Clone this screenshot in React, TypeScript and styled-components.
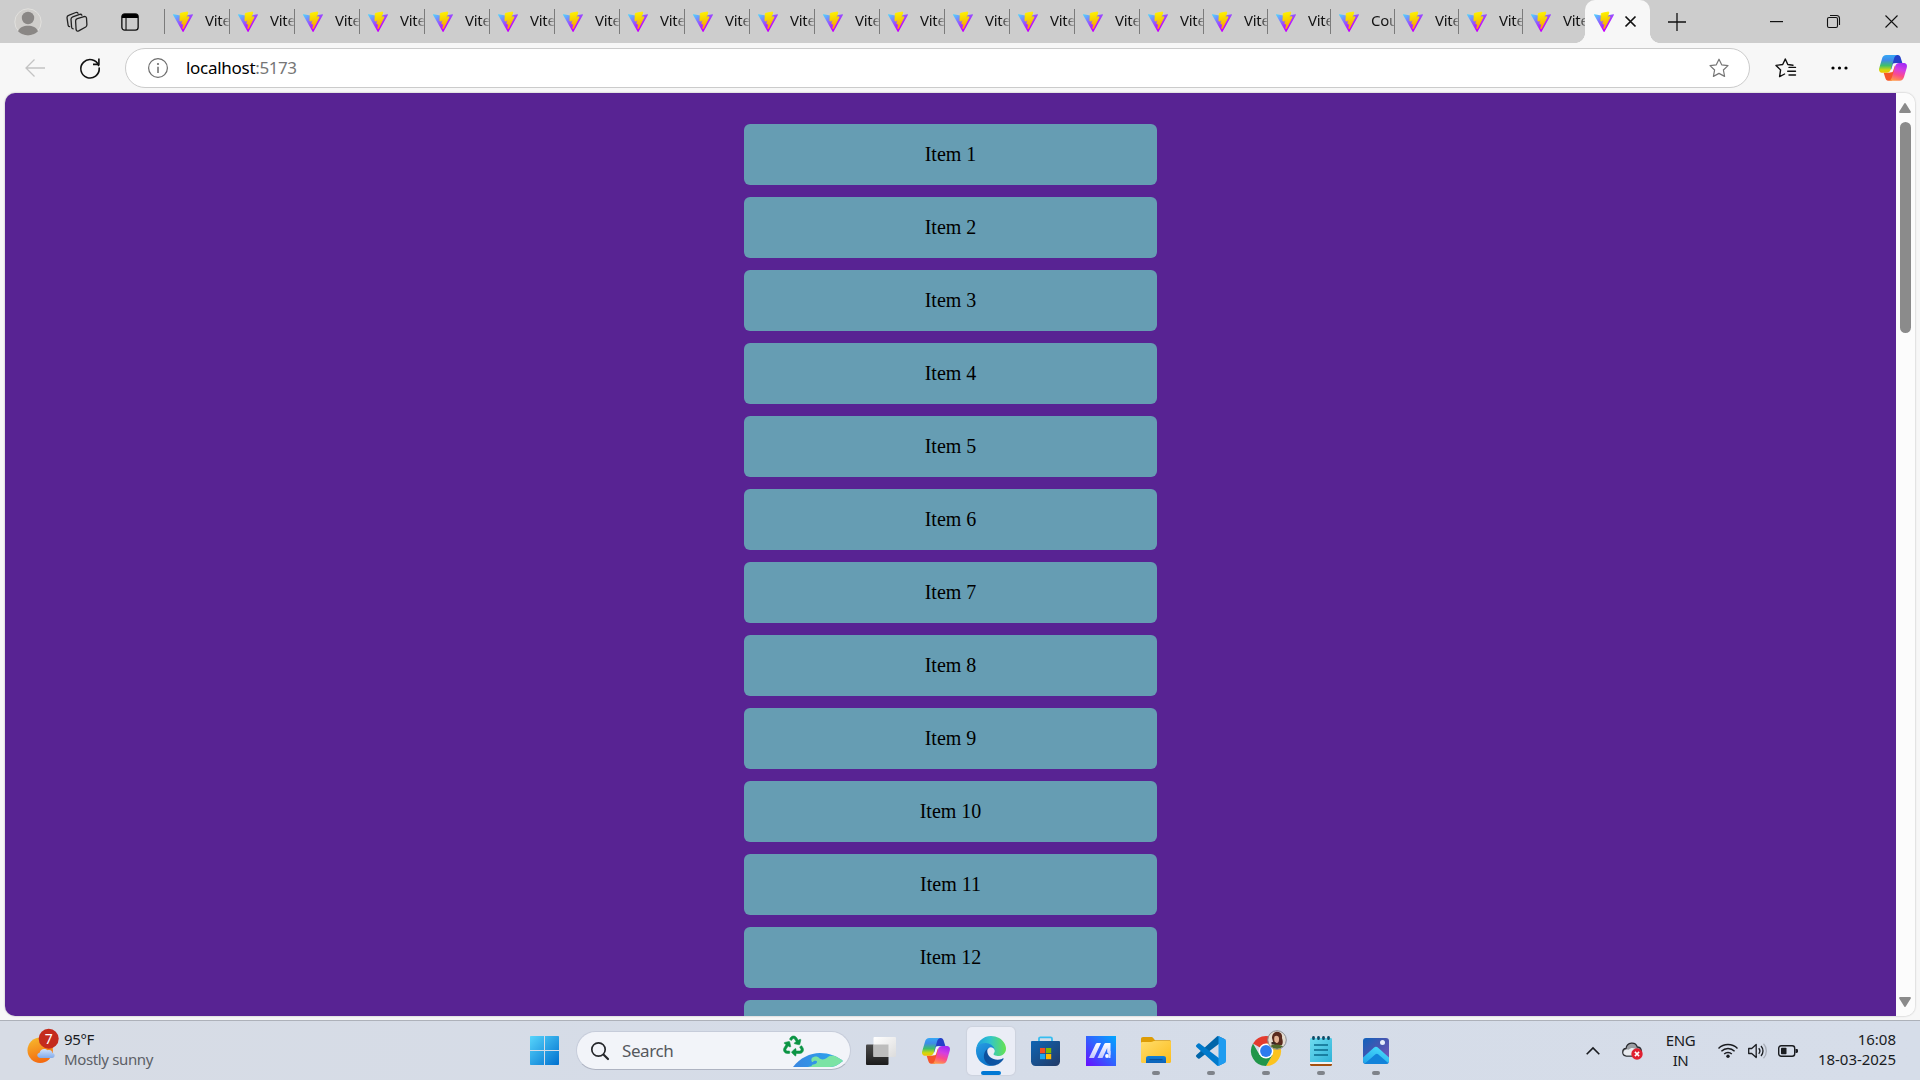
import React from 'react';
import styled, { createGlobalStyle } from 'styled-components';
import { FaRecycle } from 'react-icons/fa';

const uiFont = `'Noto Sans', 'Open Sans', sans-serif`;

const GlobalStyle = createGlobalStyle`
  * { box-sizing: border-box; }
  html, body { margin: 0; padding: 0; }
  body { overflow: hidden; font-family: ${uiFont}; }
  svg { display: block; flex: none; overflow: visible; }
`;

const Screen = styled.div`
  width: 1920px;
  height: 1080px;
  display: flex;
  flex-direction: column;
  background: #f7f7f7;
  overflow: hidden;
`;

/* ---------- tab strip ---------- */

const TabStrip = styled.header`
  height: 43px;
  flex: none;
  display: flex;
  background: #cdcdcd;
`;

const StripSlot = styled.div<{ $w: number }>`
  width: ${(p) => p.$w}px;
  height: 43px;
  flex: none;
  display: flex;
  align-items: center;
  justify-content: center;
`;

const Tab = styled.div<{ $w: number }>`
  width: ${(p) => p.$w}px;
  height: 43px;
  flex: none;
  display: flex;
  align-items: center;
  overflow: hidden;
  background: linear-gradient(#7b7b7b, #7b7b7b) 0 9px / 1px 25px no-repeat;
  padding: 0 0 0 9px;
  gap: 12px;
`;

const TabTitle = styled.span`
  width: 24px;
  flex: none;
  overflow: hidden;
  white-space: nowrap;
  font-size: 15px;
  line-height: 22px;
  letter-spacing: -0.3px;
  margin-top: -3px;
  color: transparent;
  background: linear-gradient(90deg, #111 66%, #cdcdcd 108%);
  background-clip: text;
  -webkit-background-clip: text;
`;

const ActiveTab = styled.div`
  position: relative;
  width: 65px;
  height: 43px;
  flex: none;
  display: flex;
  align-items: center;
  padding-left: 9px;
  gap: 11px;
  background: #f7f7f7;
  border-radius: 10px 10px 0 0;
  &::before,
  &::after {
    content: '';
    position: absolute;
    bottom: 0;
    width: 10px;
    height: 10px;
  }
  &::before {
    left: -10px;
    background: radial-gradient(circle at 0 0, #cdcdcd 9.6px, #f7f7f7 10.2px);
  }
  &::after {
    right: -10px;
    background: radial-gradient(circle at 100% 0, #cdcdcd 9.6px, #f7f7f7 10.2px);
  }
`;

const Spacer = styled.div`
  flex: 1;
`;

/* ---------- toolbar ---------- */

const Toolbar = styled.div`
  height: 50px;
  flex: none;
  display: flex;
  align-items: center;
  background: #f7f7f7;
`;

const ToolSlot = styled.div<{ $w: number }>`
  width: ${(p) => p.$w}px;
  height: 50px;
  flex: none;
  display: flex;
  align-items: center;
  justify-content: center;
`;

const AddressBar = styled.div`
  width: 1625px;
  height: 40px;
  flex: none;
  display: flex;
  align-items: center;
  border: 1px solid #cbcbcb;
  border-radius: 20px;
  background: #fff;
  padding: 0 19px 0 22px;
`;

const Url = styled.span`
  flex: 1;
  margin: -1px 0 0 18px;
  font-size: 17px;
  line-height: 24px;
  letter-spacing: -0.28px;
  color: #000;
  span {
    color: #767676;
    letter-spacing: -0.45px;
  }
`;

/* ---------- page ---------- */

const PageArea = styled.div`
  height: 927px;
  flex: none;
  padding: 0 5px 4px;
`;

const PageFrame = styled.div`
  height: 923px;
  display: flex;
  overflow: hidden;
  border-radius: 10px;
  box-shadow: 0 0 2px rgba(0, 0, 0, 0.3);
`;

const Page = styled.main`
  flex: 1;
  height: 923px;
  overflow: hidden;
  display: flex;
  flex-direction: column;
  align-items: center;
  gap: 12px;
  padding-top: 31px;
  background: #582393;
`;

const Item = styled.div`
  width: 413px;
  height: 61px;
  flex: none;
  display: flex;
  align-items: center;
  justify-content: center;
  border-radius: 6px;
  background: #669db3;
  font-family: 'Liberation Serif', 'Times New Roman', serif;
  font-size: 20px;
  line-height: 23px;
  color: #000;
`;

const Scrollbar = styled.div`
  width: 19px;
  height: 923px;
  flex: none;
  display: flex;
  flex-direction: column;
  align-items: center;
  background: #fcfcfc;
  padding: 10px 1px 9px 0;
`;

const Thumb = styled.div`
  width: 11px;
  height: 211px;
  margin-top: 9px;
  border-radius: 6px;
  background: #8b8b8b;
`;

/* ---------- taskbar ---------- */

const Taskbar = styled.footer`
  height: 60px;
  flex: none;
  display: flex;
  align-items: center;
  border-top: 1px solid #adb1b9;
  background: linear-gradient(90deg, #d7dce5, #d5dce8 50%, #d6dde9);
`;

const Weather = styled.div`
  width: 520px;
  height: 59px;
  flex: none;
  display: flex;
  align-items: center;
  padding: 0 0 4px 27px;
  gap: 5px;
`;

const WeatherIcon = styled.svg`
  width: 32px;
  height: 36px;
  margin-bottom: 5px;
`;

const TwoLines = styled.div<{ $align: string; $ls: number }>`
  display: flex;
  flex-direction: column;
  text-align: ${(p) => p.$align};
  font-size: 15px;
  line-height: 20px;
  letter-spacing: ${(p) => p.$ls}px;
  white-space: nowrap;
  color: #191b1e;
`;

const Muted = styled.span`
  color: #5c6066;
`;

const AppSlot = styled.div<{ $active?: boolean }>`
  position: relative;
  width: 48px;
  height: 48px;
  flex: none;
  display: flex;
  align-items: center;
  justify-content: center;
  border-radius: 5px;
  background: ${(p) => (p.$active ? '#eaedf6' : 'transparent')};
  box-shadow: ${(p) => (p.$active ? '0 0 1px 1px #cdd2de' : 'none')};
`;

const Running = styled.i<{ $active?: boolean }>`
  position: absolute;
  bottom: 0;
  left: ${(p) => (p.$active ? 14 : 20)}px;
  width: ${(p) => (p.$active ? 20 : 8)}px;
  height: 4px;
  border-radius: 2px;
  background: ${(p) => (p.$active ? '#0078d4' : '#7f838a')};
`;

const Apps = styled.div`
  display: flex;
  gap: 7px;
  margin-left: 6px;
`;

const SearchBox = styled.div`
  width: 275px;
  height: 39px;
  flex: none;
  display: flex;
  align-items: center;
  margin-left: 8px;
  padding: 0 7px 0 14px;
  border: 1px solid #c6ccda;
  border-bottom-color: #aeb3c2;
  border-radius: 20px;
  background: #f2f4f9;
`;

const SearchText = styled.span`
  flex: 1;
  margin-left: 13px;
  font-size: 17px;
  line-height: 24px;
  letter-spacing: -0.4px;
  color: #55585d;
`;

const SearchArt = styled.div`
  width: 60px;
  height: 37px;
  display: flex;
  align-items: flex-end;
  padding-bottom: 2px;
`;

const RecycleMark = styled(FaRecycle)`
  width: 21px;
  height: 20px;
  margin: 0 -11px 11px 0;
  color: #0b9444;
  stroke: #0b9444;
  stroke-width: 14px;
`;

const Tray = styled.div`
  flex: 1;
  height: 59px;
  display: flex;
  align-items: center;
  justify-content: flex-end;
  padding-right: 24px;
`;

const TraySlot = styled.div<{ $w: number; $lift?: number }>`
  width: ${(p) => p.$w}px;
  flex: none;
  display: flex;
  align-items: center;
  justify-content: center;
  padding-bottom: ${(p) => p.$lift ?? 0}px;
`;

/* ---------- icons ---------- */

const ViteLogo = () => (
  <svg width="20" height="20" viewBox="0 0 256 257">
    <path
      fill="url(#viteBody)"
      d="M255.153 37.938L134.897 252.976c-2.483 4.44-8.862 4.466-11.382.048L.875 37.958c-2.746-4.814 1.371-10.646 6.827-9.67l120.385 21.517a6.537 6.537 0 0 0 2.322-.004l117.867-21.483c5.438-.991 9.574 4.796 6.877 9.62Z"
    />
    <path
      fill="url(#viteBolt)"
      stroke="url(#viteBolt)"
      strokeWidth="12"
      d="M185.432.063L96.44 17.501a3.268 3.268 0 0 0-2.634 3.014l-5.474 92.456a3.268 3.268 0 0 0 3.997 3.378l24.777-5.718c2.318-.535 4.413 1.507 3.936 3.838l-7.361 36.047c-.495 2.426 1.782 4.5 4.151 3.78l15.304-4.649c2.372-.72 4.652 1.36 4.15 3.788l-11.698 56.621c-.732 3.542 3.979 5.473 5.943 2.437l1.313-2.028l72.516-144.72c1.215-2.423-.88-5.186-3.54-4.672l-25.505 4.922c-2.396.462-4.435-1.77-3.759-4.114l16.646-57.705c.677-2.35-1.37-4.583-3.769-4.113Z"
    />
  </svg>
);

const Defs = () => (
  <defs>
    <linearGradient id="viteBody" x1="-.8%" x2="57.6%" y1="7.6%" y2="78.4%">
      <stop offset="0" stopColor="#4fd0ff" />
      <stop offset="1" stopColor="#c400ff" />
    </linearGradient>
    <linearGradient id="viteBolt" x1="43.4%" x2="50.3%" y1="2.2%" y2="89%">
      <stop offset="0" stopColor="#fff000" />
      <stop offset=".4" stopColor="#f6d800" />
      <stop offset="1" stopColor="#ffa800" />
    </linearGradient>
    <linearGradient id="cpLeft" x1="0" x2="0" y1="0" y2="1">
      <stop offset="0" stopColor="#35a8f5" />
      <stop offset=".3" stopColor="#3f8be8" />
      <stop offset=".6" stopColor="#3fc06a" />
      <stop offset=".85" stopColor="#d5d80c" />
      <stop offset="1" stopColor="#f0c000" />
    </linearGradient>
    <linearGradient id="cpRight" x1=".6" x2=".3" y1="0" y2="1">
      <stop offset="0" stopColor="#a42cf5" />
      <stop offset=".35" stopColor="#d53fe0" />
      <stop offset=".65" stopColor="#fb4a8c" />
      <stop offset="1" stopColor="#ff9a45" />
    </linearGradient>
    <linearGradient id="winLogo" x1="0" x2="1" y1="0" y2="1">
      <stop offset="0" stopColor="#57d5fb" />
      <stop offset="1" stopColor="#0070cf" />
    </linearGradient>
    <linearGradient id="edgeA" x1="0" x2="1" y1="0" y2="0">
      <stop offset="0" stopColor="#1e9be0" />
      <stop offset=".45" stopColor="#2fc3cf" />
      <stop offset="1" stopColor="#66e34f" />
    </linearGradient>
    <linearGradient id="edgeB" x1="0" x2=".5" y1="0" y2="1">
      <stop offset="0" stopColor="#2a9fe4" />
      <stop offset="1" stopColor="#0a72c8" />
    </linearGradient>
    <linearGradient id="edgeC" x1="0" x2="1" y1="0" y2="0">
      <stop offset="0" stopColor="#0b4f9c" />
      <stop offset="1" stopColor="#1059a8" />
    </linearGradient>
    <linearGradient id="sun" x1=".3" x2=".6" y1="0" y2="1">
      <stop offset="0" stopColor="#f6b62c" />
      <stop offset="1" stopColor="#f4670f" />
    </linearGradient>
    <linearGradient id="cloud" x1="0" x2="0" y1="0" y2="1">
      <stop offset="0" stopColor="#cfe2fb" />
      <stop offset="1" stopColor="#83abea" />
    </linearGradient>
    <linearGradient id="store" x1="0" x2="1" y1="0" y2="1">
      <stop offset="0" stopColor="#0e65b4" />
      <stop offset="1" stopColor="#233a66" />
    </linearGradient>
    <linearGradient id="asus" x1="0" x2="1" y1="1" y2="0">
      <stop offset="0" stopColor="#6a0cff" />
      <stop offset=".5" stopColor="#3162ff" />
      <stop offset="1" stopColor="#00a8ff" />
    </linearGradient>
    <linearGradient id="asusMark" x1="0" x2="0" y1="0" y2="1">
      <stop offset="0" stopColor="#ffffff" />
      <stop offset="1" stopColor="#c3c9ff" />
    </linearGradient>
    <linearGradient id="folder" x1="0" x2="1" y1="0" y2="1">
      <stop offset="0" stopColor="#ffdc6b" />
      <stop offset="1" stopColor="#fcbd1c" />
    </linearGradient>
    <linearGradient id="folderBlue" x1="0" x2="0" y1="0" y2="1">
      <stop offset="0" stopColor="#1180d8" />
      <stop offset="1" stopColor="#0c62b8" />
    </linearGradient>
    <linearGradient id="note" x1="0" x2="1" y1="0" y2="1">
      <stop offset="0" stopColor="#6fdcf0" />
      <stop offset="1" stopColor="#2fb2d8" />
    </linearGradient>
    <linearGradient id="photoBg" x1="0" x2="1" y1="0" y2="1">
      <stop offset="0" stopColor="#0f62bd" />
      <stop offset=".45" stopColor="#4556b0" />
      <stop offset="1" stopColor="#7a58c0" />
    </linearGradient>
    <linearGradient id="photoHill" x1=".6" x2="0" y1="0" y2="1">
      <stop offset="0" stopColor="#45d8fb" />
      <stop offset="1" stopColor="#20a2e8" />
    </linearGradient>
    <linearGradient id="tvBack" x1="0" x2="0" y1="0" y2="1">
      <stop offset="0" stopColor="#4a4a4a" />
      <stop offset="1" stopColor="#1c1c1c" />
    </linearGradient>
    <linearGradient id="tvFront" x1="0" x2="1" y1="0" y2="1">
      <stop offset="0" stopColor="#ffffff" />
      <stop offset="1" stopColor="#dcdcdc" />
    </linearGradient>
    <linearGradient id="earth" x1="0" x2="1" y1="0" y2="0">
      <stop offset="0" stopColor="#3a86e0" />
      <stop offset="1" stopColor="#28a8f0" />
    </linearGradient>
    <clipPath id="earthClip">
      <path d="M0 14C7 5 17 0 27 0c9 0 17 3 23 8-4 3-8 6-13 6Z" />
    </clipPath>
    <clipPath id="avatarClip">
      <circle cx="26" cy="4" r="9" />
    </clipPath>
  </defs>
);

const SharedDefs = styled.svg`
  position: absolute;
  width: 0;
  height: 0;
`;

const Copilot = ({ w = 28 }: { w?: number }) => (
  <svg width={w} height={(w * 77) / 84} viewBox="0 0 84 77">
    <path d="M46 0h10c6 0 8 4 10 11l4 13H54c-7 0-9 4-11 10l-4 12-7-8Z" fill="#2440c8" />
    <path d="M38 77H28c-6 0-8-4-10-11l-4-13h16c7 0 9-4 11-10l4-12 7 8Z" fill="#f5552a" />
    <path
      d="M22 0h33c-6 1-8 5-10 11l-9 31c-2 7-6 11-13 11H11C2 53-2 47 1 38l8-27C11 4 15 0 22 0Z"
      fill="url(#cpLeft)"
    />
    <path
      d="M62 77H29c6-1 8-5 10-11l9-31c2-7 6-11 13-11h12c9 0 13 6 10 15l-8 27c-2 7-6 11-13 11Z"
      fill="url(#cpRight)"
    />
    <path d="M45 25h8c-4 2-5 5-7 11l-4 13c-1 2-2 3-4 3h-8c4-2 5-4 7-10l3-10c1-4 2-6 5-7Z" fill="#f7f7fb" />
  </svg>
);

const Profile = () => (
  <svg width="28" height="28" viewBox="0 0 28 28">
    <circle cx="14" cy="14" r="13.2" fill="#d0cecb" stroke="#e2e1de" />
    <circle cx="14" cy="10" r="6.2" fill="#8a8785" />
    <path d="M4 23.300c1.500-4 5.500-5.600 10-5.600s8.500 1.600 10 5.600c-2.500 2.700-6 4.100-10 4.100S6.500 26 4 23.300Z" fill="#8a8785" />
  </svg>
);

const Workspaces = () => (
  <svg width="22" height="22" viewBox="0 0 22 22" fill="none" stroke="#222" strokeWidth="1.3" strokeLinejoin="round" strokeLinecap="round">
    <path d="M11.300 7.700 18 5.600c1.300-.4 2.300.3 2.500 1.400l.4 6.800c0 1-.4 1.700-1.200 2.200l-7 3.900c-1.400.7-2.400 0-2.600-1.200L9.600 10c0-1.100.6-1.900 1.700-2.300Z" />
    <path d="M7.200 17.800c-.9-.1-1.500-.7-1.600-1.600L5 8.200c0-1.100.6-2 1.700-2.400l7-2.400c1-.3 1.800 0 2.200.8" />
    <path d="M3.600 15.600c-.9-.1-1.400-.7-1.500-1.500L1 6.700c0-1.100.5-2 1.600-2.400L9.800 1.500c1-.3 1.800 0 2.200.8" />
  </svg>
);

const TabActions = () => (
  <svg width="18" height="18" viewBox="0 0 19 19">
    <rect x=".9" y=".9" width="17.2" height="17.2" rx="3" fill="none" stroke="#111" strokeWidth="1.400" />
    <path d="M1 5.300V3.500C1 2 2 1 3.500 1h12C17 1 18 2 18 3.500v1.800Z" fill="#000" />
    <path d="M5.300 5v13" stroke="#111" strokeWidth="1.200" />
  </svg>
);

const Cross = ({ s, w = 1.3 }: { s: number; w?: number }) => (
  <svg width={s} height={s} viewBox={`0 0 ${s} ${s}`}>
    <path d={`M.5 .5 ${s - 0.5} ${s - 0.5}M${s - 0.5} .5 .5 ${s - 0.5}`} stroke="#111" strokeWidth={w} />
  </svg>
);

const starPath =
  'M10 1.200l2.700 5.600 6.300.8-4.600 4.400 1.200 6.400L10 15.400l-5.600 3 1.200-6.400L1 7.600l6.300-.8Z';

const weatherIcon = (
  <WeatherIcon viewBox="0 0 32 36">
    <circle cx="13.200" cy="22.300" r="12.700" fill="url(#sun)" />
    <path d="M13.500 30c-3.600 0-4.400-4.600-.9-5.300.6-3.600 5.200-5 7.900-2.400 3-1 5 .8 4.800 2.800 3.400.3 3 4.900-.2 4.900Z" fill="url(#cloud)" />
    <circle cx="21.700" cy="10.800" r="10" fill="#c42b1c" />
    <text x="21.700" y="16" textAnchor="middle" fontSize="14" fill="#fff">
      7
    </text>
  </WeatherIcon>
);

const icons: Record<string, React.ReactNode> = {
  taskview: (
    <svg width="30" height="28" viewBox="0 0 30 28">
      <rect x="0" y="7.500" width="22.500" height="20.500" rx="1" fill="url(#tvBack)" />
      <rect x="7.500" y="0" width="22.500" height="20" rx="1" fill="url(#tvFront)" />
      <rect x="7.500" y="7.500" width="15" height="12.500" fill="#bdbdbd" />
    </svg>
  ),
  copilot: <Copilot />,
  edge: (
    <svg width="30" height="30" viewBox="0 0 256 256">
      <path d="M231 190.500c-3.400 1.800-6.900 3.400-10.500 4.700a101.800 101.800 0 0 1-35.900 6.400c-47.300 0-88.500-32.500-88.500-74.300 0-11.300 6.200-22 15.900-27.600C69.300 101.500 58.200 146.100 58.200 172.200c0 73.900 68 81.300 82.700 81.300 7.900 0 19.800-2.300 27-4.600l1.300-.4a128.300 128.300 0 0 0 66.600-52.800 4 4 0 0 0-4.800-5.200z" fill="url(#edgeC)" />
      <path d="M105.700 241.400a79.200 79.200 0 0 1-22.700-21.300A80.700 80.700 0 0 1 112 99.800c3.100-1.500 8.500-4.100 15.600-4a32.400 32.400 0 0 1 25.700 13 31.900 31.900 0 0 1 6.300 18.700c0-.2 24.500-79.600-80-79.600-43.900 0-80 41.600-80 78.200a130.200 130.200 0 0 0 12.100 56 128 128 0 0 0 156.400 67 75.500 75.500 0 0 1-62.400-7.700z" fill="url(#edgeB)" />
      <path d="M152.300 148.900c-.8 1-3.300 2.500-3.300 5.700 0 2.600 1.700 5.100 4.700 7.200 14.400 10 41.500 8.700 41.600 8.700 10.700 0 21.100-2.900 30.300-8.400a61.500 61.500 0 0 0 30.400-52.900c.2-22.400-8-37.300-11.300-43.900C223.400 23.900 177.700 0 128 0A128 128 0 0 0 0 126.200c.5-36.500 36.800-66 80-66 3.500 0 23.500.3 42 10.100 16.300 8.600 24.900 18.900 30.800 29.200 6.200 10.700 7.300 24.200 7.300 29.500s-2.700 13.300-7.800 19.900z" fill="url(#edgeA)" />
    </svg>
  ),
  store: (
    <svg width="30" height="30" viewBox="0 0 30 30">
      <path d="M8 5.500V2.700c0-1 .6-1.400 1.400-1.400h10.200c.8 0 1.400.4 1.400 1.400v2.800" fill="none" stroke="#35bdf0" strokeWidth="1.800" />
      <path d="M0 6c0-.6.300-.9.900-.9h27.200c.6 0 .9.300.9.900v19.500c0 2.500-2 4.500-4.500 4.500h-20C2 30 0 28 0 25.500Z" fill="url(#store)" />
      <rect x="9" y="12" width="5.200" height="5.200" fill="#f25022" />
      <rect x="15" y="12" width="5.200" height="5.200" fill="#7fba00" />
      <rect x="9" y="18" width="5.200" height="5.200" fill="#1aa7f0" />
      <rect x="15" y="18" width="5.200" height="5.200" fill="#ffb900" />
    </svg>
  ),
  asus: (
    <svg width="30" height="30" viewBox="0 0 30 30">
      <rect width="30" height="30" fill="url(#asus)" />
      <path d="M3 22 9.500 8.500C10 7.400 10.700 7 12 7h3L8 22Z" fill="url(#asusMark)" />
      <path d="M11.500 22 18 8.500c.5-1.100 1.200-1.500 2.500-1.500h4v12l-3.300-2.500V12L16.500 22Z" fill="url(#asusMark)" />
      <circle cx="21" cy="20" r="1.900" fill="#fff" />
      <path d="M22.500 15H24.500v7h-2Z" fill="#d5daff" />
    </svg>
  ),
  folder: (
    <svg width="30" height="27" viewBox="0 0 30 27">
      <path d="M0 2C0 .8.8 0 2 0h8c1 0 1.600.300 2.200 1L14 3.200h14.500c.9 0 1.500.6 1.500 1.500V14H0Z" fill="#dd9c05" />
      <path d="M0 6.300C0 5.400.6 5 1.500 5H10c.8 0 1.300-.2 1.800-.5L12.800 4H29c.6 0 1 .4 1 1v19.500c0 .9-.6 1.500-1.500 1.500h-27C.6 26 0 25.400 0 24.500Z" fill="url(#folder)" />
      <path d="M5 26v-4.600C5 19.800 6 19 7.500 19h15c1.500 0 2.500.8 2.500 2.400V26Z" fill="url(#folderBlue)" />
      <path d="M8.500 22.700h13" stroke="#0a4a92" strokeWidth="1" />
    </svg>
  ),
  vscode: (
    <svg width="30" height="30" viewBox="0 0 100 100">
      <path d="M96.500 10.800 75.900.9a6.200 6.200 0 0 0-7.100 1.200L1.300 63.600a4.200 4.200 0 0 0 0 6.200l5.500 5a4.200 4.200 0 0 0 5.300.2l81.300-61.700c2.700-2 6.600 0 6.600 3.400V16.500a6.200 6.200 0 0 0-3.500-5.700Z" fill="#0065a9" />
      <path d="m96.500 89.200-20.600 9.900a6.200 6.200 0 0 1-7.100-1.200L1.300 36.400a4.200 4.200 0 0 1 0-6.200l5.500-5a4.200 4.200 0 0 1 5.300-.2l81.300 61.700c2.700 2 6.600 0 6.600-3.400v.2a6.200 6.200 0 0 1-3.500 5.700Z" fill="#007acc" />
      <path d="M75.900 99.100a6.200 6.200 0 0 1-7.100-1.200c2.300 2.300 6.200.7 6.200-2.600V4.700c0-3.300-3.900-4.900-6.200-2.600A6.200 6.200 0 0 1 75.900.9l20.600 9.900a6.200 6.200 0 0 1 3.500 5.700v67a6.200 6.200 0 0 1-3.500 5.700Z" fill="#1f9cf0" />
    </svg>
  ),
  chrome: (
    <svg width="30" height="30" viewBox="0 0 30 30">
      <path d="M15 15 2 7.500A15 15 0 0 1 28 7.500Z" fill="#e33b2e" />
      <path d="M15 7.500h13A15 15 0 0 1 15 30l6.500-11.200Z" fill="#fcc31e" />
      <path d="M8.500 18.700 2 7.500A15 15 0 0 0 15 30l6.500-11.200-6.500 3Z" fill="#21964a" />
      <circle cx="15" cy="15" r="7.400" fill="#fff" />
      <circle cx="15" cy="15" r="5.900" fill="#2d7bee" />
      <g clipPath="url(#avatarClip)">
        <rect x="16" y="-6" width="20" height="20" fill="#e5ddd0" />
        <path d="M21 2c0-4 2.500-6.500 5.500-6.300 3.500.300 5 3 4.500 6.300 1 3 1 5 0 7h-7c-2-1-2-4-3-7Z" fill="#5a2a1d" />
        <path d="M23.500.500c1.500-1.500 4-1 4.500 1.500.300 3-.5 5-2.500 5s-2.800-3.500-2-6.500Z" fill="#e3b394" />
        <path d="M17 14c1-4.500 4-5.500 8-5.500 5 0 8 1.500 9 5.500Z" fill="#4f6a2c" />
        <rect x="20.500" y="6" width="4" height="2.500" fill="#3b2a26" />
      </g>
      <circle cx="26" cy="4" r="9.300" fill="none" stroke="#8e8f92" strokeWidth="1" />
    </svg>
  ),
  notepad: (
    <svg width="22" height="30" viewBox="0 0 22 30">
      <path d="M0 25h22v3.500c0 .9-.5 1.500-1.500 1.500h-19C.5 30 0 29.400 0 28.500Z" fill="#a4500f" />
      <path d="M0 24h22v4H0Z" fill="#f3f3f3" />
      <path d="M0 3.500C0 2.500.500 2 1.500 2h19c1 0 1.500.5 1.500 1.500V26H0Z" fill="url(#note)" />
      {[3.5, 8.5, 13.5, 18.5].map((x) => (
        <rect key={x} x={x - 1.3} y="0" width="2.600" height="4" rx="1.300" fill="#0e4a66" />
      ))}
      <path d="M4 9h14M4 14h14M4 19h14" stroke="#0b6a8c" strokeWidth="1.700" />
    </svg>
  ),
  photos: (
    <svg width="26" height="26" viewBox="0 0 26 26">
      <rect width="26" height="26" rx="3" fill="url(#photoBg)" />
      <path d="M0 19.500 10.800 9.700c1.400-1.200 2.900-1.200 4.300 0L26 19.500V23c0 1.800-1.200 3-3 3H3c-1.800 0-3-1.200-3-3Z" fill="url(#photoHill)" />
      <path d="M12.500 16.300c.8-.7 1.800-.7 2.600 0L25.200 25c-.6.600-1.300 1-2.200 1H3c-.5 0-1-.1-1.400-.3Z" fill="#1283da" />
      <circle cx="19.500" cy="4.500" r="2.500" fill="#e6ecfa" />
    </svg>
  ),
};

const appList = [
  { id: 'taskview', running: false },
  { id: 'copilot', running: false },
  { id: 'edge', running: true, active: true },
  { id: 'store', running: false },
  { id: 'asus', running: false },
  { id: 'folder', running: true },
  { id: 'vscode', running: true },
  { id: 'chrome', running: true },
  { id: 'notepad', running: true },
  { id: 'photos', running: true },
];

const TAB_COUNT = 22;
const COUNTER_TAB = 18;
const NARROW_TABS = [17, 21];
const tabs = Array.from({ length: TAB_COUNT }, (_, i) => ({
  title: i === COUNTER_TAB ? 'Cou' : 'Vite',
  width: i < 15 ? 65 : NARROW_TABS.includes(i) ? 63 : 64,
}));

const items = Array.from({ length: 13 }, (_, i) => `Item ${i + 1}`);

export default function App() {
  return (
    <Screen>
      <GlobalStyle />
      <SharedDefs>
        <Defs />
      </SharedDefs>

      <TabStrip>
        <StripSlot $w={56}><Profile /></StripSlot>
        <StripSlot $w={42}><Workspaces /></StripSlot>
        <StripSlot $w={64}><TabActions /></StripSlot>
        <StripSlot $w={2} />
        {tabs.map((t, i) => (
          <Tab key={i} $w={t.width}>
            <ViteLogo />
            <TabTitle>{t.title}</TabTitle>
          </Tab>
        ))}
        <ActiveTab>
          <ViteLogo />
          <Cross s={11} w={1.7} />
        </ActiveTab>
        <StripSlot $w={54}>
          <svg width="18" height="18" viewBox="0 0 18 18">
            <path d="M9 0v18M0 9h18" stroke="#111" strokeWidth="1.300" />
          </svg>
        </StripSlot>
        <Spacer />
        <StripSlot $w={57}>
          <svg width="13" height="1" viewBox="0 0 13 1">
            <rect width="13" height="1.200" fill="#111" />
          </svg>
        </StripSlot>
        <StripSlot $w={57}>
          <svg width="13" height="13" viewBox="0 0 13 13" fill="none" stroke="#111" strokeWidth="1.100">
            <rect x=".5" y="2.500" width="10" height="10" rx="1.500" />
            <path d="M3 .5h6.500c1.800 0 3 1.200 3 3V10" />
          </svg>
        </StripSlot>
        <StripSlot $w={58}><Cross s={13} w={1.1} /></StripSlot>
      </TabStrip>

      <Toolbar>
        <ToolSlot $w={70}>
          <svg width="20" height="18" viewBox="0 0 20 18" fill="none" stroke="#c3c3c3" strokeWidth="1.300">
            <path d="M9.500.5 1 9l8.500 8.500M1 9h19" />
          </svg>
        </ToolSlot>
        <ToolSlot $w={40}>
          <svg width="20" height="20" viewBox="0 0 20 20" fill="none" stroke="#111" strokeWidth="1.600">
            <path d="M18.600 7.400A9.200 9.200 0 1 0 19.200 10" strokeLinecap="round" />
            <path d="M18.900.5v5.900H13" strokeLinejoin="round" />
          </svg>
        </ToolSlot>
        <ToolSlot $w={15} />
        <AddressBar>
          <svg width="20" height="20" viewBox="0 0 20 20">
            <circle cx="10" cy="10" r="9.400" fill="none" stroke="#6d6d6d" strokeWidth="1.200" />
            <path d="M10 8.700V15" stroke="#6d6d6d" strokeWidth="1.500" />
            <circle cx="10" cy="6" r="1.100" fill="#6d6d6d" />
          </svg>
          <Url>localhost<span>:5173</span></Url>
          <svg width="22" height="20" viewBox="0 0 20 20" fill="none" stroke="#777" strokeWidth="1.200" strokeLinejoin="round">
            <path d={starPath} />
          </svg>
        </AddressBar>
        <ToolSlot $w={70}>
          <svg width="21" height="20" viewBox="0 0 21 20" fill="none" stroke="#111" strokeWidth="1.400" strokeLinejoin="round" strokeLinecap="round">
            <path d="M18 7.200l-5.200-.7L10.300 1 7.700 6.500 1 7.400l4.600 4.500-1 6.700 5-2.600" />
            <path d="M14 10.200h6.500M12.700 14h7.800M14 17.800h6.500" transform="translate(0 -.8)" />
          </svg>
        </ToolSlot>
        <ToolSlot $w={38}>
          <svg width="17" height="4" viewBox="0 0 17 4">
            <circle cx="2" cy="2" r="1.600" /><circle cx="8.500" cy="2" r="1.600" /><circle cx="15" cy="2" r="1.600" />
          </svg>
        </ToolSlot>
        <ToolSlot $w={70}><Copilot /></ToolSlot>
      </Toolbar>

      <PageArea>
        <PageFrame>
          <Page>
            {items.map((label) => (
              <Item key={label}>{label}</Item>
            ))}
          </Page>
          <Scrollbar>
            <svg width="12" height="10" viewBox="0 0 12 10">
              <path d="M6 1 11 9H1Z" fill="#8b8b8b" stroke="#8b8b8b" strokeWidth="1.800" strokeLinejoin="round" />
            </svg>
            <Thumb />
            <Spacer />
            <svg width="12" height="10" viewBox="0 0 12 10">
              <path d="M1 1h10L6 9Z" fill="#8b8b8b" stroke="#8b8b8b" strokeWidth="1.800" strokeLinejoin="round" />
            </svg>
          </Scrollbar>
        </PageFrame>
      </PageArea>

      <Taskbar>
        <Weather>
          {weatherIcon}
          <TwoLines $align="left" $ls={-0.36}>
            <span>95°F</span>
            <Muted>Mostly sunny</Muted>
          </TwoLines>
        </Weather>
        <AppSlot>
          <svg width="29" height="29" viewBox="0 0 29 29">
            <path d="M1 0h13v14H0V1c0-.6.400-1 1-1ZM15 0h13c.6 0 1 .400 1 1v13H15ZM0 15h14v14H1c-.6 0-1-.4-1-1ZM15 15h14v13c0 .6-.4 1-1 1H15Z" fill="url(#winLogo)" />
          </svg>
        </AppSlot>
        <SearchBox>
          <svg width="18" height="18" viewBox="0 0 18 18" fill="none" stroke="#25272b" strokeLinecap="round">
            <circle cx="7.500" cy="7.500" r="6.700" strokeWidth="1.700" />
            <path d="m12.700 12.700 4.300 4.300" strokeWidth="2.200" />
          </svg>
          <SearchText>Search</SearchText>
          <SearchArt>
            <RecycleMark />
            <svg width="50" height="14" viewBox="0 0 50 14">
              <path d="M0 14C7 5 17 0 27 0c9 0 17 3 23 8-4 3-8 6-13 6Z" fill="url(#earth)" />
              <g clipPath="url(#earthClip)" fill="#7be3a4">
                <path d="M19 5c2-2 6-2 7 0 2 2 6 2 9-1 2-2 5-1 7-2l10 6-14 8H11c1-2 5-2 8-3-2-2 5-1 5-4 0-2-4-1-4 0-2 0-2-3-1-4Z" />
              </g>
            </svg>
          </SearchArt>
        </SearchBox>
        <Apps>
          {appList.map((app) => (
            <AppSlot key={app.id} $active={app.active}>
              {icons[app.id]}
              {app.running && <Running $active={app.active} />}
            </AppSlot>
          ))}
        </Apps>
        <Tray>
          <TraySlot $w={39}>
            <svg width="14" height="8" viewBox="0 0 14 8" fill="none" stroke="#1a1c20" strokeWidth="1.600">
              <path d="M.700 7.300 7 1l6.300 6.300" />
            </svg>
          </TraySlot>
          <TraySlot $w={40}>
            <svg width="21" height="18" viewBox="0 0 21 18">
              <path d="M4.500 14C-.5 13.500-.3 6.800 4 6.500 5-.300 13.500-.5 15.300 5c4 0 5.200 5 3 7.500L15 14Z" fill="#9b9ea3" stroke="#2a2c30" strokeWidth="1.300" />
              <path d="M1.700 12c-1-4 3-5 5-4.200C9 5 13 6 15 8l-4 5.500H4.500Z" fill="#e9ebef" />
              <circle cx="15" cy="12" r="5.700" fill="#e02030" />
              <path d="m12.900 9.900 4.200 4.200m0-4.200-4.200 4.200" stroke="#fff" strokeWidth="1.500" />
            </svg>
          </TraySlot>
          <TraySlot $w={57} $lift={2}>
            <TwoLines $align="center" $ls={-0.4}>
              <span>ENG</span>
              <span>IN</span>
            </TwoLines>
          </TraySlot>
          <TraySlot $w={37}>
            <svg width="20" height="15" viewBox="0 0 20 15" fill="none" stroke="#1a1c20" strokeWidth="1.400">
              <path d="M.5 5.500a13.400 13.400 0 0 1 19 0M3.400 8.300a9.300 9.300 0 0 1 13.200 0M6.200 11a5.400 5.400 0 0 1 7.600 0" />
              <circle cx="10" cy="13.200" r="1.700" fill="#1a1c20" stroke="none" />
            </svg>
          </TraySlot>
          <TraySlot $w={24}>
            <svg width="20" height="16" viewBox="0 0 20 16" fill="none" stroke="#1a1c20" strokeWidth="1.300" strokeLinejoin="round">
              <path d="M.700 5.500h3L8.200 1.400v13.200L3.700 10.500h-3Z" />
              <path d="M10.700 5.300a4 4 0 0 1 0 5.400M13 3a7.300 7.300 0 0 1 0 10" />
              <path d="M15.500.800a10.500 10.500 0 0 1 0 14.400" stroke="#a9aeb8" />
            </svg>
          </TraySlot>
          <TraySlot $w={35}>
            <svg width="20" height="12" viewBox="0 0 20 12">
              <rect x=".7" y=".7" width="16" height="10.600" rx="2.500" fill="none" stroke="#1a1c20" strokeWidth="1.400" />
              <rect x="3" y="2.800" width="5.500" height="6.400" rx=".8" fill="#1a1c20" />
              <path d="M17.500 4h1c.9 0 1.500.5 1.500 1.200v1.600c0 .7-.6 1.200-1.500 1.200h-1Z" fill="#1a1c20" />
            </svg>
          </TraySlot>
          <TraySlot $w={91} $lift={4}>
            <Spacer />
            <TwoLines $align="right" $ls={-0.02}>
              <span>16:08</span>
              <span>18-03-2025</span>
            </TwoLines>
          </TraySlot>
        </Tray>
      </Taskbar>
    </Screen>
  );
}
